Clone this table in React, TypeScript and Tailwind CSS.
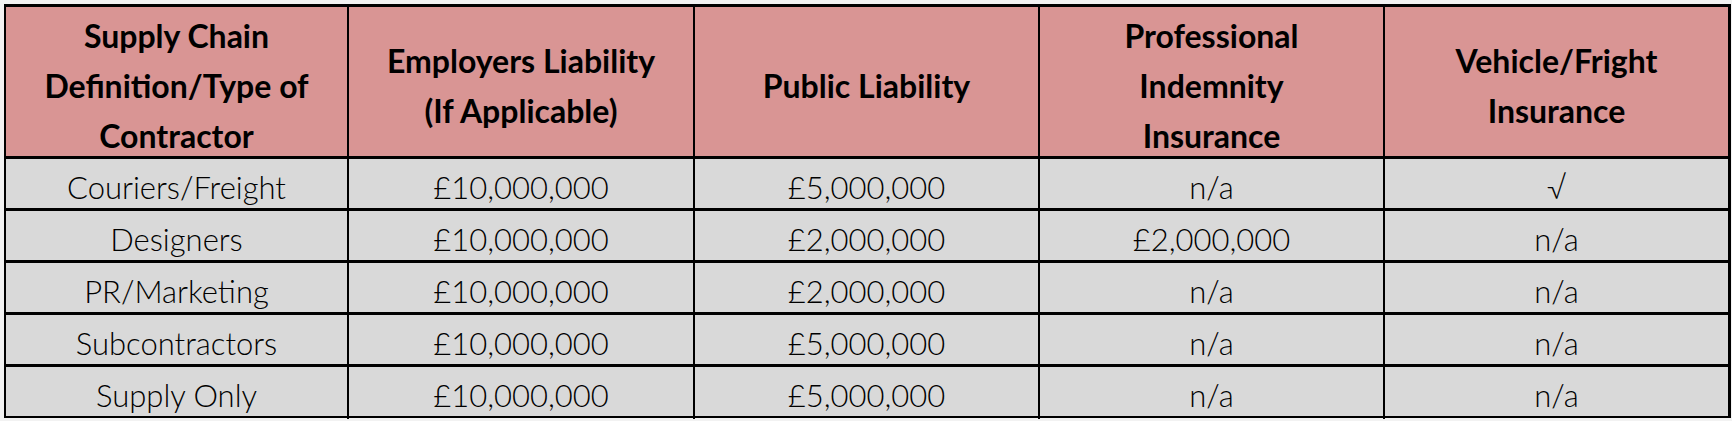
const HEADERS = [
  ['Supply Chain', 'Definition/Type of', 'Contractor'],
  ['Employers Liability', '(If Applicable)'],
  ['Public Liability'],
  ['Professional', 'Indemnity', 'Insurance'],
  ['Vehicle/Fright', 'Insurance'],
]

const ROWS = [
  ['Couriers/Freight', '£10,000,000', '£5,000,000', 'n/a', '√'],
  ['Designers', '£10,000,000', '£2,000,000', '£2,000,000', 'n/a'],
  ['PR/Marketing', '£10,000,000', '£2,000,000', 'n/a', 'n/a'],
  ['Subcontractors', '£10,000,000', '£5,000,000', 'n/a', 'n/a'],
  ['Supply Only', '£10,000,000', '£5,000,000', 'n/a', 'n/a'],
]

const COLS = 'grid grid-cols-[341px_346px_345px_345px_345px]'

export default function App() {
  return (
    <div className="w-[1732px] h-[421px] bg-[#f2f2f2] pt-[4px] pl-[4px] font-['Lato',sans-serif] text-black">
      <div className="w-[1727px] border-t-[3px] border-l-2 border-r-[3px] border-b-2 border-black">
        {/* header */}
        <div className={COLS + ' h-[149px] bg-[#d99594]'}>
          {HEADERS.map((lines, i) => (
            <div
              key={i}
              className={
                'flex flex-col items-center justify-center pt-[4px] text-center font-bold text-[32px] leading-[50px] ' +
                (i > 0 ? 'border-l-2 border-black' : '')
              }
            >
              {lines.map((l) => (
                <span key={l}>{l}</span>
              ))}
            </div>
          ))}
        </div>

        {ROWS.map((row, r) => (
          <div key={r} className={COLS + ' h-[52px] border-t-[3px] border-black bg-[#d9d9d9]'}>
            {row.map((cell, i) => (
              <div
                key={i}
                className={
                  'flex items-center justify-center pt-[5px] text-[31px] font-light ' +
                  (i > 0 ? 'border-l-2 border-black' : '')
                }
              >
                {cell}
              </div>
            ))}
          </div>
        ))}
      </div>
    </div>
  )
}
